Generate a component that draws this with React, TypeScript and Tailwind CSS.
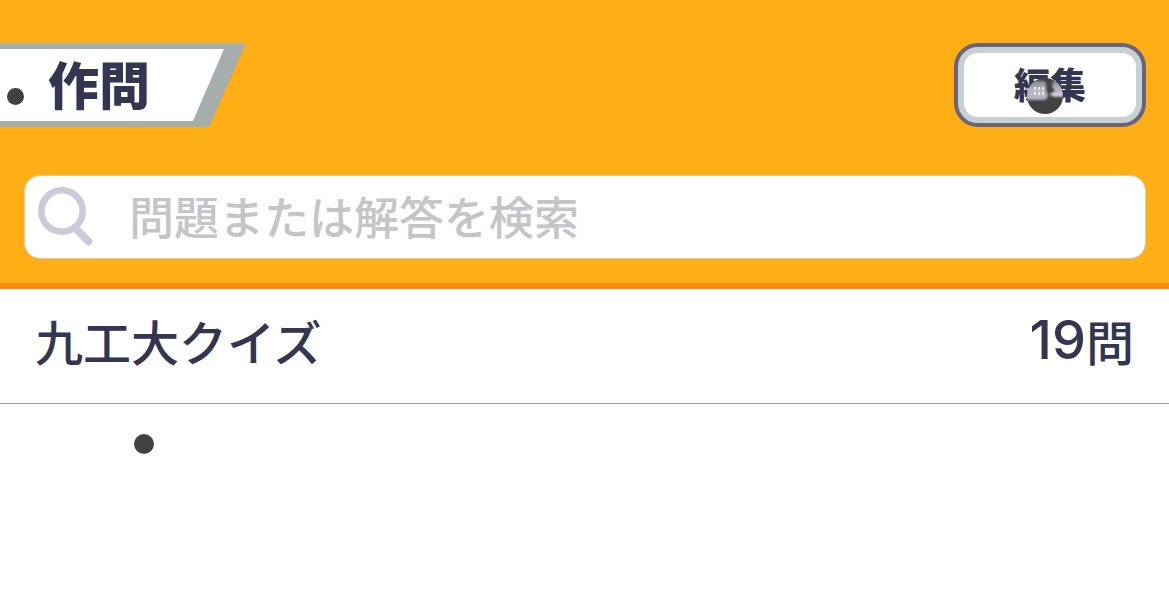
import { useState } from "react";

type Quiz = {
  id: string;
  title: string;
  count: number;
};

const quizzes: Quiz[] = [{ id: "kyutech", title: "九工大クイズ", count: 19 }];

function SearchIcon({ className }: { className?: string }) {
  return (
    <svg viewBox="0 0 56 60" fill="none" className={className} aria-hidden="true">
      <path d="M36 39 L51.5 54.5" stroke="#cbcadb" strokeWidth="7.6" strokeLinecap="round" />
      <circle cx="25" cy="24" r="20.7" fill="#fff" stroke="#cbcadb" strokeWidth="6.6" />
    </svg>
  );
}

function GhostMarker({ className }: { className?: string }) {
  return (
    <svg viewBox="0 0 38 38" className={className} aria-hidden="true">
      <defs>
        <clipPath id="marker-clip">
          <circle cx="19" cy="19" r="18" />
        </clipPath>
        <linearGradient id="marker-shade" x1="0" y1="0" x2="0" y2="1">
          <stop offset="0" stopColor="#8a8a90" />
          <stop offset="0.5" stopColor="#b8b8c0" />
          <stop offset="1" stopColor="#b4b4bc" />
        </linearGradient>
        <filter id="marker-soft">
          <feGaussianBlur stdDeviation="0.8" />
        </filter>
      </defs>
      <circle cx="19" cy="19" r="18" fill="#424242" />
      <g clipPath="url(#marker-clip)">
        <g filter="url(#marker-soft)">
          <path d="M-2 23 V4 H19 Q21 8 20 12 L22 19 Q21 23 17 23Z" fill="url(#marker-shade)" />
          <path d="M27 4 H40 V20 H28 L23 17 L29 14 L26 10Z" fill="url(#marker-shade)" />
          <path d="M26 18 L36 17" stroke="#dedee2" strokeWidth="2" />
        </g>
      </g>
      <path d="M9 10v3M13 10v3M17 10v3M9 15v3M13 15v3M17 15v3" stroke="#f0f0f2" strokeWidth="1.8" />
    </svg>
  );
}

function PageTitle({ children }: { children: string }) {
  return (
    <div className="relative h-[84px] w-[246px] bg-[#a5adad] py-[6px] [clip-path:polygon(0_0,100%_0,209px_100%,0_100%)]">
      <div className="flex h-full w-[224px] items-center bg-white pb-1 pl-12 [clip-path:polygon(0_0,100%_0,193px_100%,0_100%)]">
        <h1 className="text-[51px] leading-none font-black">{children}</h1>
      </div>
      <span className="absolute top-[45px] left-[7px] size-[17px] rounded-full bg-[#424242]" />
    </div>
  );
}

export default function App() {
  const [query, setQuery] = useState("");
  const visible = quizzes.filter((quiz) => quiz.title.includes(query));

  return (
    <div className="min-h-dvh bg-white font-['Noto_Sans_CJK_JP',sans-serif] text-[#333551]">
      <header className="border-b-6 border-[#ff8b0b] bg-[#ffae16] pt-[43px] pb-6">
        <div className="flex items-center justify-between pr-[23px]">
          <PageTitle>作問</PageTitle>
          <button
            type="button"
            className="relative h-[84px] w-[192px] rounded-[24px] border-4 border-[#69647b] bg-[#c8d0d4] p-[6px]"
          >
            <span className="flex h-full items-center justify-center rounded-[14px] bg-white pb-1 text-[36px] leading-none font-black">
              編集
            </span>
            <GhostMarker className="absolute top-[30px] left-[68px] size-[38px]" />
          </button>
        </div>

        <div className="mt-12 pr-[23px] pl-6">
          <label className="flex h-[84px] items-center rounded-[16px] border border-[#d8cbb2] bg-white pl-3">
            <SearchIcon className="h-[60px] w-[56px] shrink-0" />
            <input
              type="text"
              aria-label="問題または解答を検索"
              placeholder="問題または解答を検索"
              value={query}
              onChange={(event) => setQuery(event.target.value)}
              className="ml-9 h-full min-w-0 flex-1 bg-transparent pr-4 pb-1 text-[45px] font-medium outline-none placeholder:text-[#c5c5c7]"
            />
          </label>
        </div>
      </header>

      <main className="relative">
        <ul>
          {visible.map((quiz) => (
            <li key={quiz.id} className="border-b border-[#999999]">
              <a
                href={`#${quiz.id}`}
                className="flex h-[114px] items-center justify-between pr-[35px] pb-3 pl-[35px] text-[48px] leading-none font-medium"
              >
                <span>{quiz.title}</span>
                <span className="flex items-center">
                  <span className="font-['Inter',sans-serif] text-[54px]">{quiz.count}</span>問
                </span>
              </a>
            </li>
          ))}
        </ul>
        <span className="absolute top-[145px] left-[134px] size-5 rounded-full bg-[#424242]" />
      </main>
    </div>
  );
}
